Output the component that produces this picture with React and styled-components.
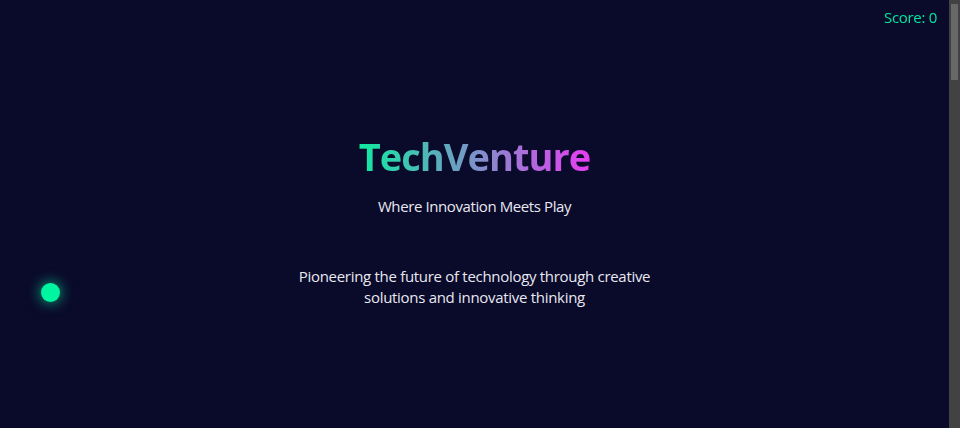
import styled, { createGlobalStyle } from "styled-components";

const GlobalStyle = createGlobalStyle`
    html {
        scrollbar-width: none;
    }

    body {
        margin: 0;
        background: #0a0a2a;
        color: #ffffff;
        font-family: "Open Sans", "Noto Sans", sans-serif;
    }
`

const Page = styled.main`
    min-height: 2370px;
    padding-right: 11px;
`

const Hero = styled.section`
    height: 100vh;
    display: flex;
    flex-direction: column;
    align-items: center;
    justify-content: center;
    text-align: center;
    padding-top: 10px;
    box-sizing: border-box;
`

const Title = styled.h1`
    margin: 0;
    font-size: 38px;
    font-weight: 700;
    letter-spacing: -1px;
    background: linear-gradient(90deg, #10eaa0, #e83cf2);
    -webkit-background-clip: text;
    background-clip: text;
    color: transparent;
`

const Subtitle = styled.p`
    margin: 14px 0 0;
    font-size: 15px;
    letter-spacing: -0.4px;
    color: #e8e8f0;
`

const Tagline = styled.p`
    margin: 50px 0 0;
    max-width: 380px;
    font-size: 15px;
    line-height: 21px;
    letter-spacing: -0.3px;
    color: #e8e8f0;
`

const Score = styled.div`
    position: fixed;
    top: 7px;
    right: 23px;
    font-size: 15px;
    letter-spacing: -0.3px;
    color: #00e5a0;
`

const Player = styled.div`
    position: absolute;
    left: 41px;
    top: 283px;
    width: 19px;
    height: 19px;
    border-radius: 50%;
    background: #00f5a0;
    box-shadow: 0 0 14px rgba(0, 245, 160, 0.8);
`

const ScrollTrack = styled.div`
    position: fixed;
    top: 0;
    right: 0;
    bottom: 0;
    width: 11px;
    background: #424242;
    padding: 4px 2px 0;
    box-sizing: border-box;
`

const ScrollThumb = styled.div`
    height: 76px;
    background: #686868;
`

const App = () => {
    return (
        <Page>
            <GlobalStyle />
            <Score>Score: 0</Score>
            <Player />
            <Hero>
                <Title>TechVenture</Title>
                <Subtitle>Where Innovation Meets Play</Subtitle>
                <Tagline>
                    Pioneering the future of technology through creative solutions and innovative thinking
                </Tagline>
            </Hero>
            <ScrollTrack>
                <ScrollThumb />
            </ScrollTrack>
        </Page>
    )
};

export default App;
